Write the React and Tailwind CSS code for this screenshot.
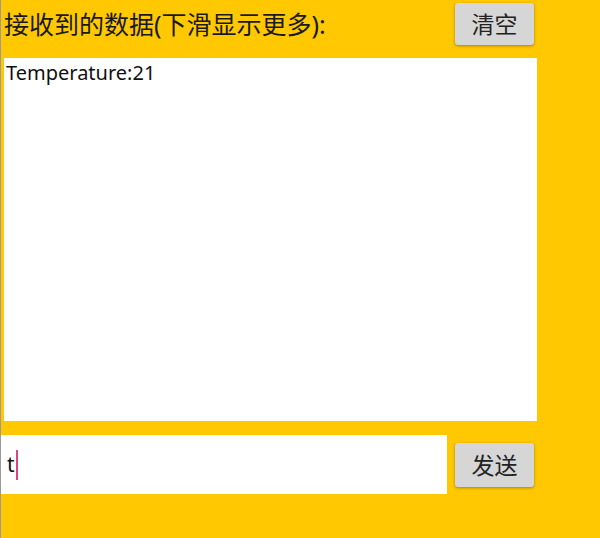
// 串口数据收发界面
export default function App() {
  const font = { fontFamily: '"Noto Sans", "Noto Sans CJK SC", sans-serif' };

  return (
    <div
      className="w-[600px] h-[538px] bg-[#ffc800] border-l border-[#9a9a9a] overflow-hidden"
      style={font}
    >
      {/* 标题行 */}
      <div className="flex items-start h-[58px]">
        <div className="pl-[3px] pt-[8px] text-[25px] leading-[32px] text-[#1a1a1a] flex-1 whitespace-nowrap">
          接收到的数据(下滑显示更多):
        </div>
        <button className="mt-[3px] mr-[66px] w-[79px] h-[42px] bg-[#d6d6d6] rounded-[3px] shadow-[0_1px_3px_rgba(0,0,0,0.35)] text-[23px] text-[#222] shrink-0">
          清空
        </button>
      </div>

      {/* 接收区 */}
      <div className="ml-[3px] w-[533px] h-[363px] bg-white px-[2px] pt-[1px] text-[20px] leading-[28px] text-[#111]">
        Temperature:21
      </div>

      {/* 发送行 */}
      <div className="flex items-start mt-[14px]">
        <div className="w-[446px] h-[59px] bg-white flex items-center pl-[6px] text-[21px] text-[#111]">
          <span>t</span>
          <span className="inline-block w-[2px] h-[30px] bg-[#e0447f] ml-[1px]"></span>
        </div>
        <button className="ml-[8px] mt-[8px] w-[79px] h-[44px] bg-[#d6d6d6] rounded-[3px] shadow-[0_1px_3px_rgba(0,0,0,0.35)] text-[23px] text-[#222]">
          发送
        </button>
      </div>
    </div>
  );
}
